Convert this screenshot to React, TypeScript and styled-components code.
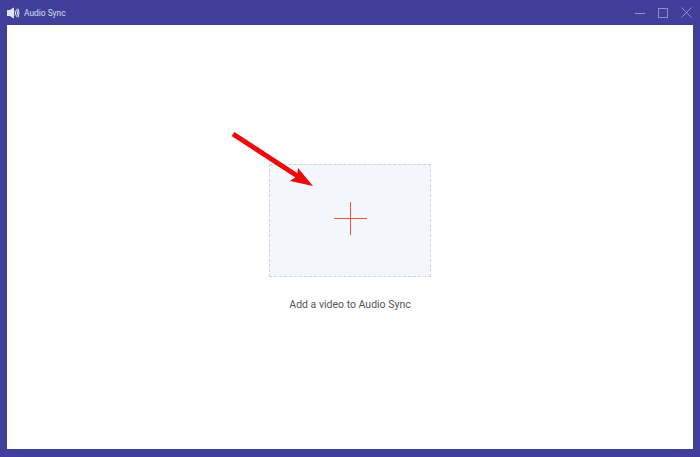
import React from "react";
import styled, { createGlobalStyle } from "styled-components";

const Global = createGlobalStyle`
  html, body { margin: 0; padding: 0; background: #40409a; }
  #root { width: 700px; height: 457px; overflow: hidden; }
`;

const Frame = styled.div`
  width: 700px;
  height: 457px;
  box-sizing: border-box;
  background: #40409a;
  padding: 0 7px 8px;
  display: flex;
  flex-direction: column;
`;

const TitleBar = styled.div`
  height: 25px;
  flex: none;
  display: flex;
  align-items: center;
  color: #dcdcf2;
  font: 8.4px "Roboto", "Liberation Sans", sans-serif;
`;

const TitleText = styled.span`
  margin-left: 4px;
  flex: 1;
`;

const WinControls = styled.div`
  display: flex;
  align-items: center;
  gap: 13px;
  margin-right: 1px;
`;

const Content = styled.main`
  flex: 1;
  background: #fff;
  display: flex;
  flex-direction: column;
  align-items: center;
  padding-top: 139px;
  position: relative;
`;

const DropZone = styled.div`
  width: 162px;
  height: 113px;
  box-sizing: border-box;
  background: #f3f6fb;
  border: 1px dashed #d0d4e0;
  padding: 0 0 4px 1px;
  display: flex;
  align-items: center;
  justify-content: center;
`;

const Caption = styled.div`
  margin-top: 21px;
  font: 10.5px/13px "Roboto", "Liberation Sans", sans-serif;
  color: #555;
`;

const ArrowLayer = styled.svg`
  position: absolute;
  left: 216px;
  top: 100px;
`;

export default function App() {
  return (
    <>
      <Global />
      <Frame>
        <TitleBar>
          <svg width="13" height="12" viewBox="0 0 13 12" fill="none" stroke="#e4e4f6" strokeWidth="1">
            <rect x="0.5" y="3.5" width="2" height="5" fill="#e4e4f6" />
            <path d="M3 3.5 L6.5 1 V11 L3 8.5Z" fill="#e4e4f6" />
            <path d="M8 3.5 Q9.3 6 8 8.5" />
            <path d="M9.6 2.2 Q11.4 6 9.6 9.8" />
            <path d="M11 1.5 Q13 6 11 10.5" />
          </svg>
          <TitleText>Audio Sync</TitleText>
          <WinControls>
            <svg width="10" height="10" viewBox="0 0 10 10" stroke="#8d8dcf" strokeWidth="1">
              <path d="M0 5.5 H10" />
            </svg>
            <svg width="10" height="10" viewBox="0 0 10 10" fill="none" stroke="#8d8dcf" strokeWidth="1">
              <rect x="0.5" y="0.5" width="9" height="9" />
            </svg>
            <svg width="11" height="11" viewBox="0 0 11 11" stroke="#8d8dcf" strokeWidth="1">
              <path d="M0.5 0.5 L10.5 10.5 M10.5 0.5 L0.5 10.5" />
            </svg>
          </WinControls>
        </TitleBar>
        <Content>
          <DropZone>
            <svg width="33" height="33" viewBox="0 0 33 33" stroke="#ee5533" strokeWidth="1">
              <path d="M0 16.5 H33 M16.5 0 V33" />
            </svg>
          </DropZone>
          <Caption>Add a video to Audio Sync</Caption>
          <ArrowLayer width="100" height="80" viewBox="0 0 100 80">
            <path d="M10 9 L76 52" stroke="#ee0a0a" strokeWidth="5" />
            <path d="M90 61 L67 56 L74 51 L75 43Z" fill="#ee0a0a" />
          </ArrowLayer>
        </Content>
      </Frame>
    </>
  );
}
